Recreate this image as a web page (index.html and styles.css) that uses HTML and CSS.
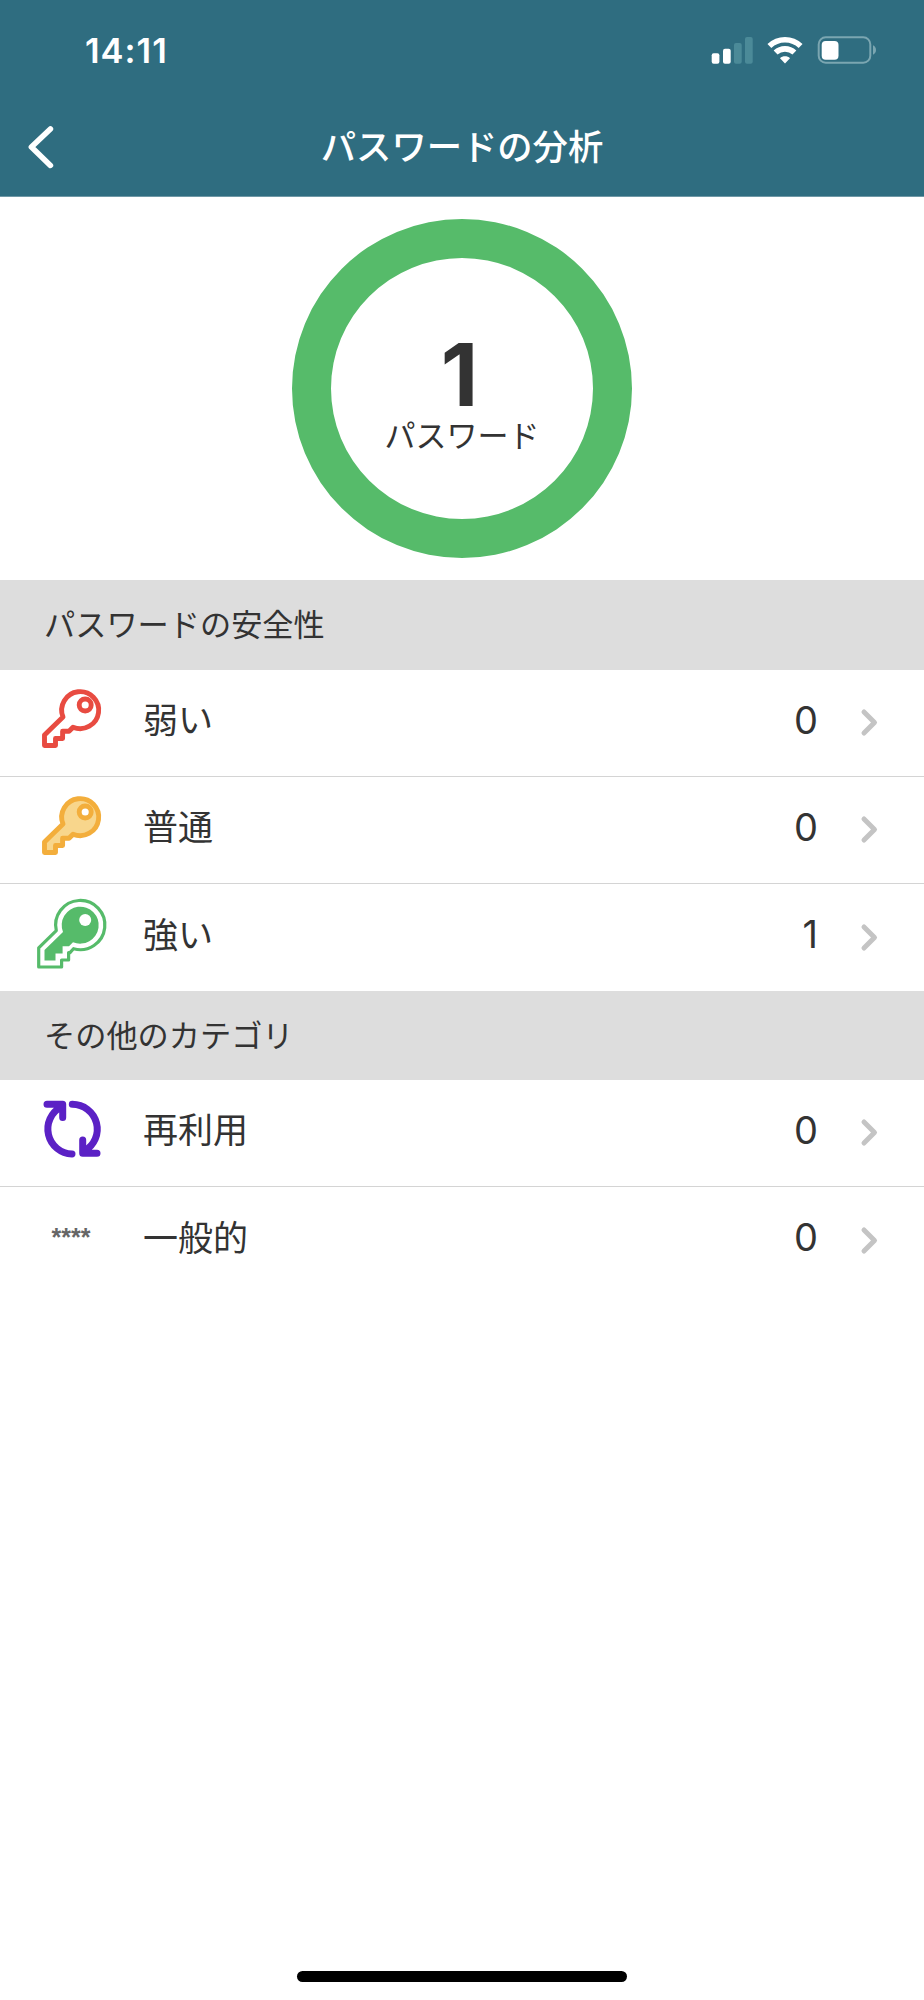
FILE: index.html
```html
<!DOCTYPE html>
<html lang="ja">
<head>
<meta charset="utf-8">
<title>パスワードの分析</title>
<link rel="stylesheet" href="styles.css">
</head>
<body>
<svg class="defs" width="0" height="0">
  <defs>
    <path id="key" d="M38 43.2A18.5 18.5 0 1 0 28 33L9.5 51V61.5H20.5V54.5H27.6V47.3H34Z"/>
    <path id="chevron" d="M3 3L13.5 13.5L3 24"/>
  </defs>
</svg>
<div class="screen">
  <header class="header">
    <div class="status">
      <div class="time">14:11</div>
      <div class="indicators">
        <svg class="signal" width="42" height="28" viewBox="0 0 42 28">
          <rect class="on" x="0.7" y="17.3" width="7.7" height="10.4" rx="2"/>
          <rect class="on" x="12" y="12.7" width="7.7" height="15" rx="2"/>
          <rect class="off" x="23" y="7" width="7.7" height="20.7" rx="2"/>
          <rect class="off" x="34" y="1" width="7.7" height="26.7" rx="2"/>
        </svg>
        <svg class="wifi" width="36" height="28" viewBox="0 0 36 28">
          <path class="arc" d="M2.4 10.1A22.5 22.5 0 0 1 33.6 10.1M8.6 16.6A13.6 13.6 0 0 1 27.4 16.6"/>
          <path class="dot" d="M18 27.4L13 22.2C15.5 19.7 20.5 19.7 23 22.2Z"/>
        </svg>
        <svg class="battery" width="60" height="28" viewBox="0 0 60 28">
          <rect class="shell" x="1.7" y="1.3" width="51.6" height="25.4" rx="7"/>
          <path class="cap" d="M56 9.3Q59 10.8 59 14T56 18.7Z"/>
          <rect class="level" x="4.7" y="5" width="16.8" height="18.7" rx="4"/>
        </svg>
      </div>
    </div>
    <nav class="nav">
      <svg class="back" width="26" height="44" viewBox="0 0 26 44"><path d="M22.4 4L3.4 22L22.4 40.4"/></svg>
      <h1 class="title">パスワードの分析</h1>
    </nav>
  </header>
  <section class="summary">
    <div class="donut">
      <div class="total">1</div>
      <div class="caption">パスワード</div>
    </div>
  </section>
  <h2 class="section">パスワードの安全性</h2>
  <ul class="list">
    <li class="row">
      <svg class="icon weak" width="72" height="78" viewBox="0 0 72 78"><use href="#key"/><circle cx="50.2" cy="21" r="6"/></svg>
      <span class="label">弱い</span><span class="count">0</span>
      <svg class="chevron" width="17" height="28"><use href="#chevron"/></svg>
    </li>
    <li class="row">
      <svg class="icon medium" width="72" height="78" viewBox="0 0 72 78"><use href="#key"/><circle cx="50.2" cy="21" r="6"/></svg>
      <span class="label">普通</span><span class="count">0</span>
      <svg class="chevron" width="17" height="28"><use href="#chevron"/></svg>
    </li>
    <li class="row">
      <svg class="icon strong" width="72" height="78" viewBox="0 0 72 78"><path class="halo" d="M38.5 49.7A24.6 24.6 0 1 0 21.3 31.6L3.7 48.9V68H26.6V61H33.6V53.6H35Z"/><use class="core" href="#key"/><circle cx="50.2" cy="21" r="6"/></svg>
      <span class="label">強い</span><span class="count">1</span>
      <svg class="chevron" width="17" height="28"><use href="#chevron"/></svg>
    </li>
  </ul>
  <h2 class="section other">その他のカテゴリ</h2>
  <ul class="list">
    <li class="row">
      <svg class="icon reuse" width="72" height="78" viewBox="0 0 72 78"><path d="M37.3 10.2A25 25 0 0 1 49.5 57M37 60A25 25 0 0 1 26 13M12 10.2H27.7V23.6M62 59.3H47.7V46"/></svg>
      <span class="label">再利用</span><span class="count">0</span>
      <svg class="chevron" width="17" height="28"><use href="#chevron"/></svg>
    </li>
    <li class="row">
      <span class="icon stars">****</span>
      <span class="label">一般的</span><span class="count">0</span>
      <svg class="chevron" width="17" height="28"><use href="#chevron"/></svg>
    </li>
  </ul>
  <div class="home"></div>
</div>
</body>
</html>
```

FILE: styles.css
```css
* { box-sizing: border-box; }
body { margin: 0; background: #fff; color: #333; font-family: Inter, "Noto Sans CJK JP", sans-serif; }
svg { display: block; flex: none; overflow: visible; }
.defs { position: absolute; }
.screen { width: 924px; height: 2000px; display: flex; flex-direction: column; }

.header { height: 197px; flex: none; background: #2f6d80; border-bottom: 1px solid #6f98a6; color: #fff; }
.status { height: 100px; padding: 0 47px 0 85px; display: flex; justify-content: space-between; align-items: center; }
.time { padding-top: 2px; font-size: 34.5px; font-weight: 600; line-height: 40px; letter-spacing: 1px; }
.indicators { display: flex; gap: 14px; }
.signal .on { fill: #fff; }
.signal .off { fill: #4b8a98; }
.wifi .arc { fill: none; stroke: #fff; stroke-width: 5.6; }
.wifi .dot { fill: #fff; }
.battery .shell { fill: none; stroke: #7ba6b1; stroke-width: 2; }
.battery .cap { fill: #7ba6b1; }
.battery .level { fill: #fff; }
.nav { height: 94px; display: grid; grid-template-columns: 100px 1fr 100px; align-items: center; }
.back { margin-left: 28px; }
.back path { fill: none; stroke: #fff; stroke-width: 5.6; stroke-linecap: round; stroke-linejoin: round; }
.title { margin: 0; padding-top: 2px; font-size: 35.3px; font-weight: 500; line-height: 50px; text-align: center; white-space: nowrap; }

.summary { height: 383px; flex: none; padding-top: 22px; display: flex; justify-content: center; }
.donut { width: 340px; height: 339px; border: 39.5px solid #56bb6a; border-radius: 50%; display: flex; flex-direction: column; align-items: center; padding-top: 73px; }
.total { padding-right: 5px; font-size: 87px; font-weight: 700; line-height: 88px; }
.caption { font-size: 31px; font-weight: 400; line-height: 34px; }

.section { margin: 0; height: 90px; flex: none; padding-left: 44px; background: #ddd; font-size: 31.2px; font-weight: 400; line-height: 91px; }
.other { height: 89px; }
.list { margin: 0; padding: 0; list-style: none; }
.row { height: 107px; padding: 0 46px 0 35px; display: flex; align-items: center; border-bottom: 1px solid #d4d4d4; }
.row:last-child { border-bottom: 0; }
.icon { width: 72px; flex: none; }
.label { margin: 0 0 6px 36px; flex: 1; font-size: 35px; font-weight: 400; line-height: 50px; }
.count { font-size: 38px; line-height: 50px; margin: 0 43px 7px 0; }
.chevron { fill: none; stroke: #c4c4c4; stroke-width: 5; stroke-linecap: round; stroke-linejoin: round; }
.weak { fill: none; stroke: #e84b41; stroke-width: 4.9; stroke-linejoin: round; }
.medium { fill: #f8d68c; stroke: #f3ae3c; stroke-width: 4.9; stroke-linejoin: round; }
.medium circle { fill: #fff; }
.halo { fill: #fff; stroke: #56bb6a; stroke-width: 3.2; stroke-linejoin: round; }
.core { fill: #56bb6a; }
.strong circle { fill: #fff; }
.reuse { fill: none; stroke: #5b21c5; stroke-width: 7; stroke-linecap: round; stroke-linejoin: round; }
.stars { margin-bottom: 8px; color: #666; font: bold 25px/40px "Liberation Sans", sans-serif; text-align: center; }
.home { width: 330px; height: 11px; margin: auto auto 18px; border-radius: 6px; background: #000; }
```
